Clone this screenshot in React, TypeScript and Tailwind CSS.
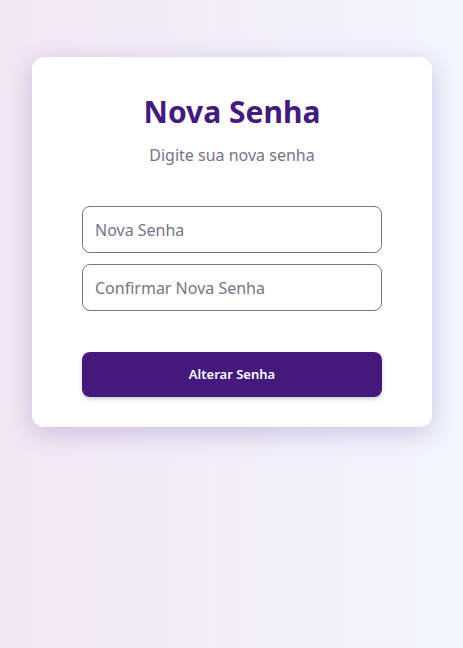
import React from 'react';

const App: React.FC = () => {
  return (
    <div
      className="min-h-[648px] w-full bg-gradient-to-r from-[#f3e6f4] to-[#f1f6fe] pt-[57px] px-8"
      style={{ fontFamily: '"Noto Sans", "Open Sans", sans-serif' }}
    >
      <div className="w-[400px] rounded-xl bg-white px-[50px] pt-[31px] pb-[30px] shadow-[0_6px_24px_rgba(90,60,150,0.25)]">
        <h1 className="text-center text-[30px] font-bold leading-[48px] text-[#431a7e]">Nova Senha</h1>
        <p className="mt-[8px] text-center text-[16px] leading-[22px] text-[#7a7288]">Digite sua nova senha</p>

        <form className="mt-[40px] flex flex-col gap-[11px]">
          <input
            type="password"
            placeholder="Nova Senha"
            className="h-[47px] w-full rounded-lg border border-[#7e7488] px-3 text-[16px] outline-none placeholder:text-[#7a7288]"
          />
          <input
            type="password"
            placeholder="Confirmar Nova Senha"
            className="h-[47px] w-full rounded-lg border border-[#7e7488] px-3 text-[16px] outline-none placeholder:text-[#7a7288]"
          />
          <button
            type="button"
            className="mt-[30px] h-[45px] w-full rounded-lg bg-[#431a7c] text-[13px] font-semibold text-white shadow-[0_2px_4px_rgba(0,0,0,0.2)]"
          >
            Alterar Senha
          </button>
        </form>
      </div>
    </div>
  );
};

export default App;
